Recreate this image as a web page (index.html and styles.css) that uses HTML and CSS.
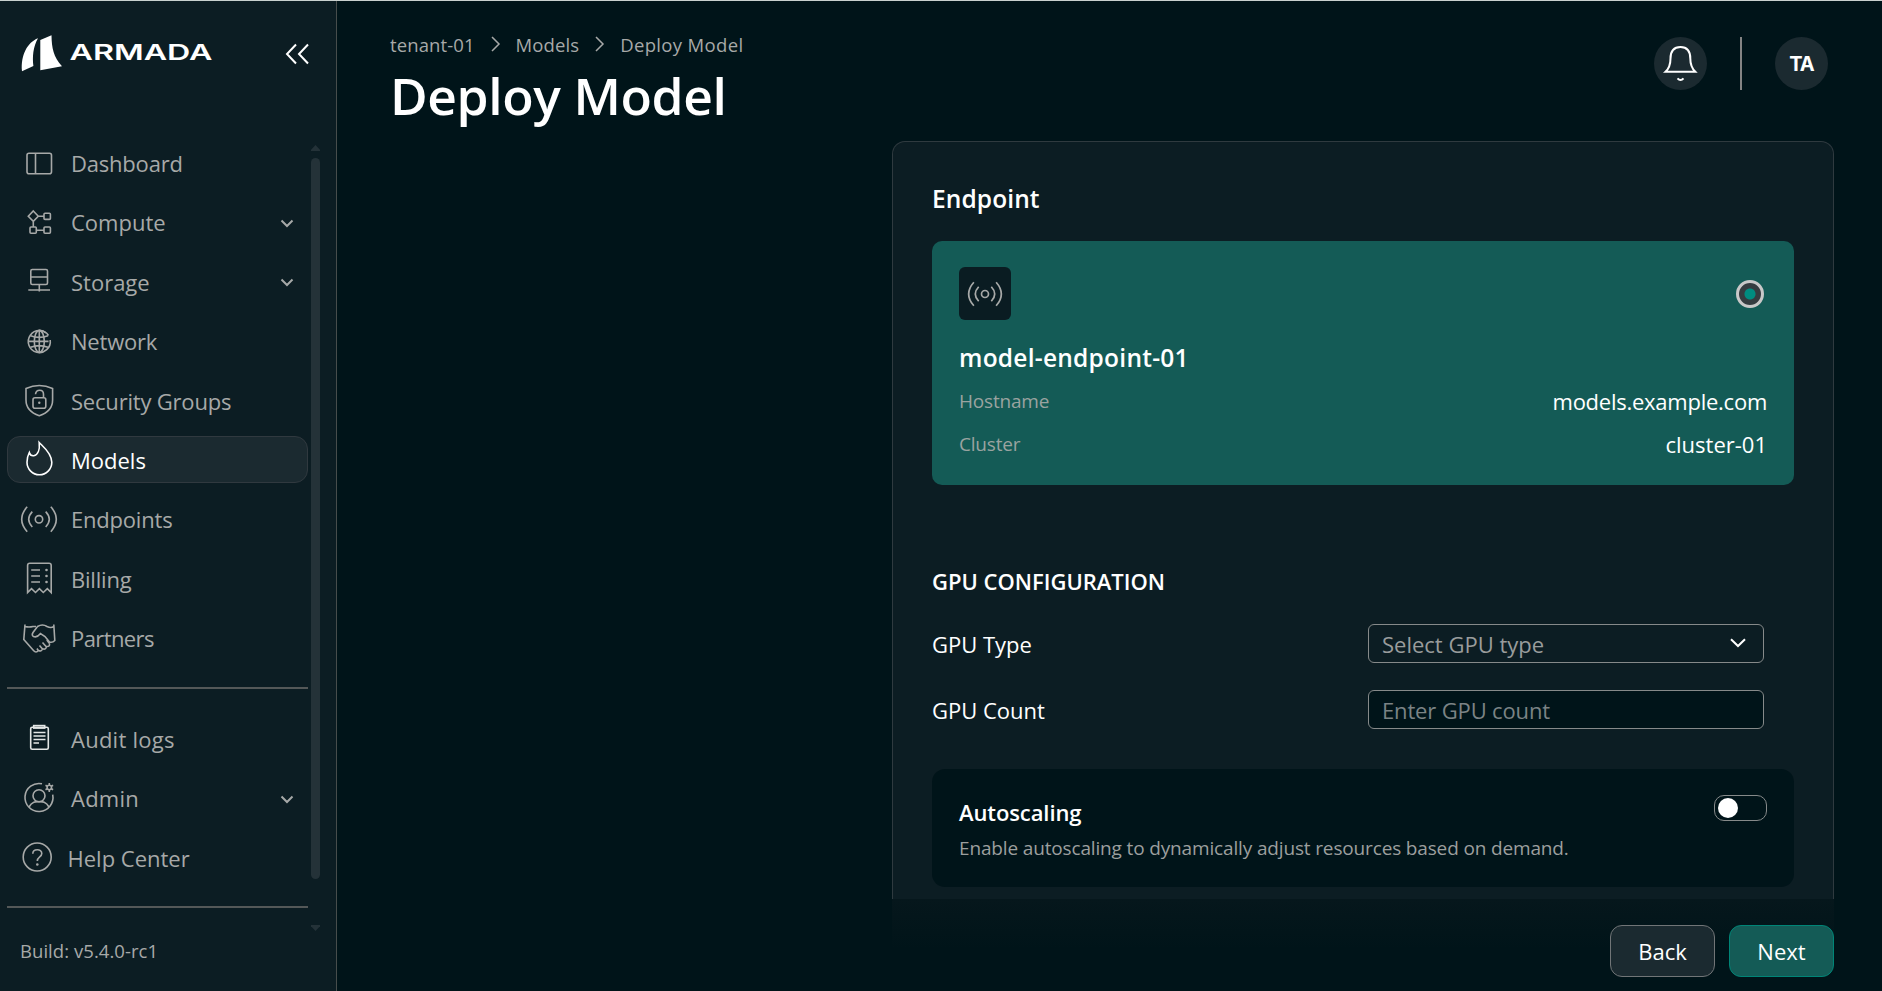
FILE: index.html
```html
<!DOCTYPE html>
<html lang="en">
<head>
<meta charset="utf-8">
<title>Deploy Model</title>
<link rel="stylesheet" href="styles.css">
</head>
<body>
<div class="app">
  <aside class="sidebar">
    <div class="brand">
      <svg class="brand-logo" width="214" height="40" viewBox="0 0 214 40">
        <path class="solid" d="M22 36.2C20.6 20 27.5 7.200 38 3.200C33 12 32.300 22 33.400 31Z"/>
        <path class="solid" d="M40.300 5L51.500 0.200C51.700 13 53.500 22 62 31.300L40.300 35.200Z"/>
        <text class="brand-name" x="69.500" y="25.300" textLength="143" lengthAdjust="spacingAndGlyphs">ARMADA</text>
      </svg>
      <svg class="collapse" width="24" height="22" viewBox="0 0 24 22"><path d="M11 1.500L2 11L11 20.500M23 1.500L14 11L23 20.500"/></svg>
    </div>

    <div class="nav-area">
      <nav class="nav">
        <a class="nav-item"><svg class="icon" viewBox="0 0 36 36"><rect x="6" y="8.200" width="24.500" height="20.600" rx="2"/><path d="M14.500 8.200V28.800"/></svg><span>Dashboard</span></a>
        <a class="nav-item"><svg class="icon" viewBox="0 0 36 36"><path d="M12.300 7L17.300 12.200L12.300 17.400L7.300 12.200ZM17.300 12.200H23M12.300 17.400V23M15.300 26.200H23"/><rect x="23" y="9.200" width="6.400" height="6.200" rx="1"/><rect x="9" y="23" width="6.300" height="6.300" rx="1"/><rect x="23" y="23" width="6.400" height="6.300" rx="1"/></svg><span class="even">Compute</span><svg class="chevron" viewBox="0 0 14 9"><path d="M1.500 1.500L7 7L12.500 1.500"/></svg></a>
        <a class="nav-item"><svg class="icon" viewBox="0 0 36 36"><rect x="9.800" y="6.500" width="16.700" height="15" rx="1.500"/><path d="M9.800 14H26.500M18.300 21.500V28.500M7.300 27H29"/></svg><span class="even">Storage</span><svg class="chevron" viewBox="0 0 14 9"><path d="M1.500 1.500L7 7L12.500 1.500"/></svg></a>
        <a class="nav-item"><svg class="icon" viewBox="0 0 36 36"><path d="M27.500 12.500A11 11 0 1 0 29.200 17"/><path d="M25 9.800A11 11 0 0 0 18.300 7.400"/><ellipse cx="18.300" cy="18.400" rx="5" ry="11"/><path d="M18.300 7.400V29.400M7.300 18.400H27.500M9.500 12.800Q18.300 16 27 12.800M9.500 24.200Q18.300 21 27 24.200"/></svg><span>Network</span></a>
        <a class="nav-item"><svg class="icon" viewBox="0 0 36 36"><path d="M5 6.500Q18.300 0.500 31.600 6.500V18C31.600 27 25 31.500 18.300 33.700C11.600 31.500 5 27 5 18Z"/><rect x="12" y="15.700" width="12.800" height="10.500" rx="2"/><path d="M14.500 12.300C15 6.800 22.500 6.800 22.500 12.300V15.700"/><circle class="dot" cx="18.300" cy="20.800" r="1.200"/></svg><span>Security Groups</span></a>
        <a class="nav-item active"><svg class="icon" viewBox="0 0 36 36"><path d="M18.200 1.500C22 5.500 30.800 12 30.800 21.300A12.400 12.400 0 0 1 6 21.300C6 17 7 14 8.300 11.500C9 14 10.500 15 12.800 14.700C17 14 18.900 8.500 18.200 1.500Z"/></svg><span class="even">Models</span></a>
        <a class="nav-item"><svg class="icon" viewBox="0 0 36 36"><circle cx="18" cy="18.300" r="3.700"/><path d="M6.200 5.800Q-4.800 18.300 6.200 30.800M29.800 5.800Q40.800 18.300 29.800 30.800M11.300 10.600Q4.100 18.300 11.300 26M24.700 10.600Q31.900 18.300 24.700 26"/></svg><span>Endpoints</span></a>
        <a class="nav-item"><svg class="icon" viewBox="0 0 36 36"><path d="M6.600 32.500V5.500Q6.600 3.300 8.800 3.300H28Q30.200 3.300 30.200 5.500V32.500L26.300 28.700L22.300 32.500L18.400 28.700L14.500 32.500L10.500 28.700Z"/><path d="M10.200 10H19M10.200 16H19M10.200 22H19"/><circle class="dot" cx="25.500" cy="10" r="1.300"/><circle class="dot" cx="25.500" cy="16" r="1.300"/><circle class="dot" cx="25.500" cy="22" r="1.300"/></svg><span>Billing</span></a>
        <a class="nav-item"><svg class="icon" viewBox="0 0 36 36"><path d="M4 4.500L2.800 19.500L12.500 30.500Q15 33.500 17.500 30.500Q20.500 32 21.500 28.800Q25 30 25.500 26.500Q29 27 28.500 23.500M4 6.500Q8 7.500 12 6.500H15M32.800 4.500L33.800 20.500Q31.500 23 28.500 22L24 16.500L19.500 13.500Q16 18 12.500 16.500Q10.300 15.500 12 12.500L16.500 6.500Q21.500 3.500 26 6.500Q30 8.500 32.800 6.500M28.500 23.500L25.800 20M25.500 27L21.500 22.500M21.500 29L18.500 25.500M17.500 31L16 28.500"/></svg><span class="tight">Partners</span></a>
      </nav>
      <hr class="rule">
      <nav class="nav">
        <a class="nav-item"><svg class="icon bright" viewBox="0 0 36 36"><rect x="9.700" y="7.300" width="17.600" height="22" rx="1.500"/><rect x="12.700" y="5.600" width="11" height="2.500"/><path d="M12.500 12.500H24.500M12.500 16H24.500M12.500 19.500H24.500M12.500 23H18"/></svg><span class="wide">Audit logs</span></a>
        <a class="nav-item"><svg class="icon" viewBox="0 0 36 36"><path d="M21 3.800A14 14 0 1 0 31.700 14.700"/><circle cx="18" cy="15.800" r="6"/><path d="M8 27C11 21.500 14.500 21.500 18 21.700C21.500 21.500 25 21.500 28 27"/><circle cx="28.300" cy="7.500" r="2.200"/><path d="M28.300 3V5M28.300 10V12M24.500 5.300L26.200 6.300M30.400 8.700L32.100 9.700M24.500 9.700L26.200 8.700M30.400 6.300L32.100 5.300"/></svg><span class="wide">Admin</span><svg class="chevron" viewBox="0 0 14 9"><path d="M1.500 1.500L7 7L12.500 1.500"/></svg></a>
        <a class="nav-item help"><svg class="icon" viewBox="0 0 36 36"><circle cx="18.200" cy="18" r="14"/><path d="M13.800 14.800C13.800 9.500 22.800 9.500 22.800 14.500C22.800 18 18.300 17.800 18.300 22"/><circle class="dot" cx="18.300" cy="25.500" r="1.300"/></svg><span class="even">Help Center</span></a>
      </nav>
      <hr class="rule second">
      <div class="scrollbar"><i class="up"></i><i class="thumb"></i><i class="down"></i></div>
    </div>
    <div class="build">Build: v5.4.0-rc1</div>
  </aside>

  <main class="main">
    <header class="header">
      <div class="heading">
        <div class="crumbs"><span>tenant-01</span><svg viewBox="0 0 9 16"><path d="M1 1L8 8L1 15"/></svg><span>Models</span><svg viewBox="0 0 9 16"><path d="M1 1L8 8L1 15"/></svg><span class="current">Deploy Model</span></div>
        <h1>Deploy Model</h1>
      </div>
      <div class="tools">
        <div class="round"><svg width="53" height="53" viewBox="0 0 53 53"><path d="M11.500 34.800C15 31.500 16.500 28 16.500 21.500C16.500 13.500 20.500 10 26.500 10C32.500 10 36.300 13.500 36.300 21.500C36.300 28 38 31.500 41.300 34.800ZM23.500 41.300Q26.500 44.800 29.500 41.300"/></svg></div>
        <div class="bar"></div>
        <div class="round avatar">TA</div>
      </div>
    </header>

    <section class="card">
      <h2>Endpoint</h2>
      <div class="endpoint">
        <div class="endpoint-top">
          <div class="endpoint-icon"><svg width="34" height="34" viewBox="0 0 36 36"><circle cx="18" cy="18" r="3.700"/><path d="M6.200 5.500Q-4.800 18 6.200 30.500M29.800 5.500Q40.800 18 29.800 30.500M11.300 10.300Q4.100 18 11.300 25.700M24.700 10.300Q31.900 18 24.700 25.700"/></svg></div>
          <div class="radio"></div>
        </div>
        <h3>model-endpoint-01</h3>
        <div class="pair"><span>Hostname</span><b class="host">models.example.com</b></div>
        <div class="pair"><span>Cluster</span><b>cluster-01</b></div>
      </div>

      <h4>GPU CONFIGURATION</h4>
      <div class="field"><label>GPU Type</label><div class="control select"><span>Select GPU type</span><svg width="16" height="10" viewBox="0 0 16 10"><path d="M1 1.200L8 8L15 1.200"/></svg></div></div>
      <div class="field"><label>GPU Count</label><div class="control input"><span>Enter GPU count</span></div></div>

      <div class="autoscaling">
        <div>
          <h5>Autoscaling</h5>
          <p>Enable autoscaling to dynamically adjust resources based on demand.</p>
        </div>
        <div class="toggle"><i></i></div>
      </div>
    </section>

    <footer class="footer">
      <button class="btn back">Back</button>
      <button class="btn next">Next</button>
    </footer>
  </main>
</div>
</body>
</html>
```
FILE: styles.css
```css
* { box-sizing: border-box; }
html, body { margin: 0; height: 100%; overflow: hidden; }
body {
  background: #001419;
  color: #fff;
  font-family: "Open Sans", "Noto Sans", sans-serif;
  font-size: 22px;
}
svg { fill: none; stroke: currentColor; overflow: visible; flex: none; }
h1, h2, h3, h4, h5, p { margin: 0; font-weight: 640; white-space: nowrap; }

.app { display: flex; height: 991px; border-top: 1px solid #c9d1cf; }

/* Sidebar */
.sidebar {
  width: 337px;
  flex: none;
  display: flex;
  flex-direction: column;
  background: #0c1d23;
  border-right: 1px solid #474d4c;
  color: #a7a9a8;
}
.brand { display: flex; height: 138px; padding-top: 34px; color: #fff; }
.solid { fill: #fff; stroke: none; }
.brand-name { font-family: Inter, sans-serif; font-size: 22px; font-weight: 600; fill: #fff; stroke: none; }
.collapse { margin: 8px 0 0 71px; stroke-width: 2; }
.nav-area { position: relative; height: 787px; padding-left: 7px; }
.nav { display: flex; flex-direction: column; gap: 12.4px; width: 301px; }
.nav-item {
  display: flex;
  align-items: center;
  height: 47px;
  padding-left: 13px;
  border: 1px solid transparent;
  border-radius: 13px;
}
.nav-item span { flex: 1; padding: 1px 0 0 14px; letter-spacing: -0.2px; white-space: nowrap; }
.nav-item .even { letter-spacing: 0; }
.nav-item .tight { letter-spacing: -0.6px; }
.nav-item .wide { letter-spacing: 0.25px; }
.nav-item.active { background: #1b2a30; border-color: #30393f; color: #fff; }
.nav-item.help .icon { margin-left: -2px; }
.nav-item.help span { padding-left: 12.5px; }
.icon { width: 36px; height: 36px; stroke-width: 1.6; }
.icon.bright { color: #e4e7e6; }
.dot { fill: currentColor; stroke: none; }
.chevron { width: 14px; height: 9px; margin: 3px 13px 0 0; stroke-width: 2; }
.rule { width: 301px; height: 2px; margin: 25.6px 0 26px; border: 0; background: #545858; }
.rule.second { margin: 25.6px 0 0; }
.scrollbar {
  position: absolute;
  left: 311px;
  top: 6px;
  width: 9px;
  height: 786px;
  display: flex;
  flex-direction: column;
  justify-content: space-between;
}
.thumb { height: 721px; margin-bottom: 40px; border-radius: 5px; background: #243238; }
.up, .down { height: 6px; background: #243238; clip-path: polygon(50% 0, 100% 80%, 100% 100%, 0 100%, 0 80%); }
.down { clip-path: polygon(0 0, 100% 0, 100% 20%, 50% 100%, 0 20%); }
.build { padding: 12px 0 0 20px; font-size: 18.5px; letter-spacing: 0.05px; }

/* Header */
.main { flex: 1; display: flex; flex-direction: column; padding: 0 48px 0 53px; }
.header { display: flex; justify-content: space-between; height: 140px; flex: none; }
.heading { padding-top: 30px; }
.crumbs { display: flex; align-items: center; height: 26px; font-size: 18.5px; letter-spacing: 0.1px; color: #a7a9a8; white-space: nowrap; }
.crumbs svg { width: 9px; height: 16px; margin: 0 16px; stroke-width: 1.5; }
.crumbs .current { letter-spacing: 0.35px; }
h1 { margin-top: 3px; font-size: 51.5px; line-height: 70px; letter-spacing: -0.4px; }
.tools { display: flex; padding: 36px 6px 0 0; }
.round { width: 53px; height: 53px; border-radius: 50%; background: #1b2a30; stroke-width: 2; }
.bar { width: 2px; height: 53px; margin: 0 33px; background: #848484; }
.avatar { display: flex; align-items: center; justify-content: center; font: 700 20px Inter, sans-serif; letter-spacing: -1px; }

/* Form card */
.card {
  align-self: flex-end;
  width: 942px;
  height: 758px;
  padding: 39px 39px 0;
  background: #0c1d23;
  border: 1px solid #2f3a3f;
  border-bottom: 0;
  border-radius: 13px 13px 0 0;
}
h2 { font-size: 24.5px; line-height: 36px; letter-spacing: 0.1px; }
.endpoint { height: 244px; margin-top: 24px; padding: 26px 27px; border-radius: 10px; background: #145b56; }
.endpoint-top { display: flex; align-items: center; justify-content: space-between; }
.endpoint-icon { display: flex; align-items: center; justify-content: center; width: 52px; height: 53px; border-radius: 6px; background: #0a1c22; color: #a7a9a8; stroke-width: 1.800; }
.radio { width: 28px; height: 28px; margin-right: 3px; border: 3px solid #c8c8c8; border-radius: 50%; background: radial-gradient(circle, #008c80 5px, #353c40 6px); }
h3 { margin: 20px 0 3px; font-size: 24.5px; line-height: 36px; letter-spacing: 0.25px; }
.pair { display: flex; justify-content: space-between; align-items: center; height: 43px; }
.pair span { font-size: 19px; letter-spacing: -0.2px; color: #9aa3a0; }
.pair b { font-weight: 400; font-size: 22px; }
.pair .host { letter-spacing: -0.25px; }
h4 { margin-top: 81px; font-size: 22px; line-height: 30px; }
.field { display: flex; align-items: center; justify-content: space-between; height: 39px; margin: 0 30px 27px 0; }
h4 + .field { margin-top: 28px; }
.control { display: flex; align-items: center; justify-content: space-between; width: 396px; height: 39px; padding: 0 17px 0 13px; border: 1px solid #868a8a; border-radius: 6px; }
.select span { color: #999c9c; }
.select svg { margin: -2px 0 0; stroke-width: 2; }
.input { background: #001419; color: #7b8385; letter-spacing: -0.15px; }
.autoscaling { display: flex; justify-content: space-between; height: 118px; margin-top: 40px; padding: 26px 27px; border-radius: 13px; background: #001419; }
h5 { font-size: 22px; line-height: 34px; letter-spacing: -0.1px; }
p { font-size: 19px; font-weight: 400; line-height: 39px; letter-spacing: -0.15px; color: #9c9f9e; }
.toggle { width: 53px; height: 26px; padding: 2px 3px; border: 1px solid #868a8a; border-radius: 10px; }
.toggle i { display: block; width: 20px; height: 20px; border-radius: 50%; background: #fff; }

/* Footer */
.footer { display: flex; align-self: flex-end; justify-content: flex-end; gap: 14px; width: 942px; height: 92px; padding-top: 26px; background: linear-gradient(#06171c, #001419 50px); }
.btn { width: 105px; height: 52px; padding: 0; border: 1px solid #717577; border-radius: 12px; background: #1b2a30; color: #fff; font: 400 22px "Open Sans", sans-serif; }
.next { background: #145b56; border-color: #008577; }
```
